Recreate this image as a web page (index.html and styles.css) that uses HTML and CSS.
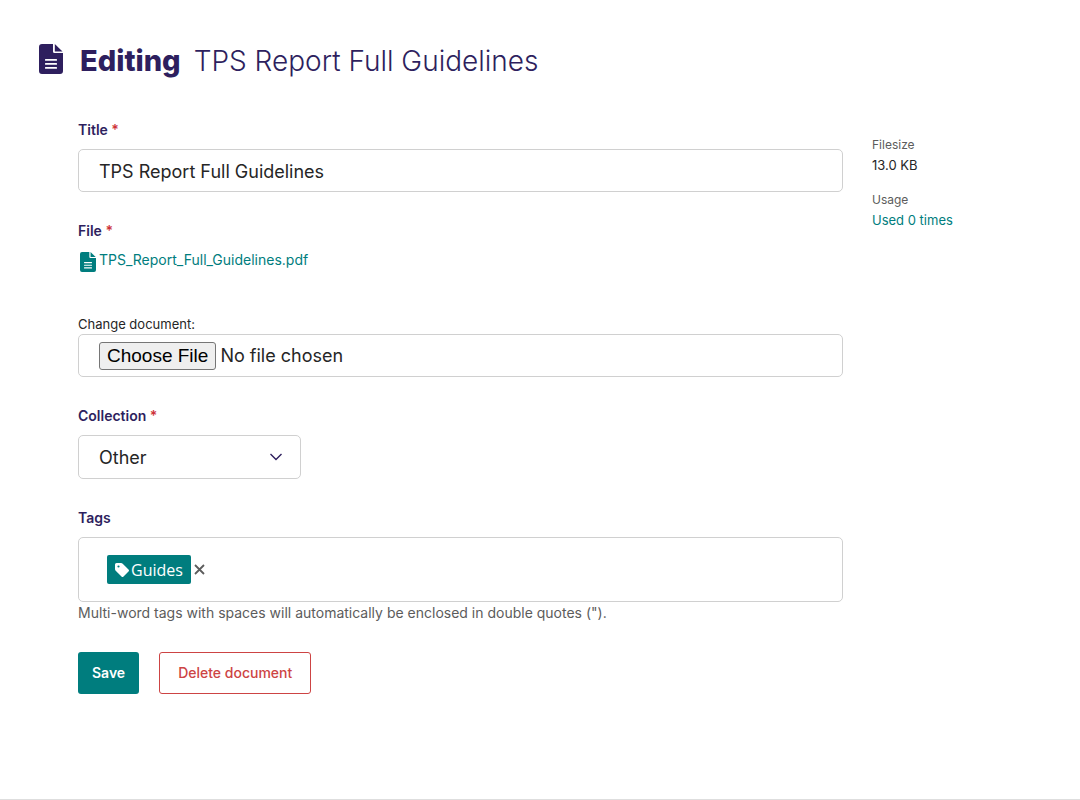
FILE: index.html
```html
<!DOCTYPE html>
<html lang="en">
<head>
<meta charset="utf-8">
<meta name="viewport" content="width=device-width, initial-scale=1">
<title>Editing TPS Report Full Guidelines</title>
<link rel="stylesheet" href="styles.css">
</head>
<body>
<svg class="sprite" aria-hidden="true">
  <symbol id="icon-doc" viewBox="0 0 24 30">
    <path fill="currentColor" fill-rule="evenodd" d="M3 0H14V7.500Q14 9 15.500 9H24V27Q24 30 21 30H3Q0 30 0 27V3Q0 0 3 0ZM6.500 15Q6 15 6 15.900T6.500 16.800H17.500Q18 16.800 18 15.900T17.500 15ZM6.500 19Q6 19 6 19.900T6.500 20.800H17.500Q18 20.800 18 19.900T17.500 19ZM6.500 23Q6 23 6 23.900T6.500 24.800H17.500Q18 24.800 18 23.900T17.500 23Z"/>
    <path fill="currentColor" d="M15.800 0L23.500 7.500H15.800Z"/>
  </symbol>
</svg>
<div class="page">
  <header class="header">
    <svg class="header-icon" aria-hidden="true"><use href="#icon-doc"/></svg>
    <h1 class="header-title"><strong>Editing</strong> <span>TPS Report Full Guidelines</span></h1>
  </header>
  <main class="layout">
    <form class="form">
      <div class="field">
        <label class="label" for="title">Title <span class="required">*</span></label>
        <input class="control" id="title" type="text" value="TPS Report Full Guidelines">
      </div>
      <div class="field file-field">
        <label class="label" for="file">File <span class="required">*</span></label>
        <a class="file-link" href="#"><svg class="file-icon" aria-hidden="true"><use href="#icon-doc"/></svg>TPS_Report_Full_Guidelines.pdf</a>
        <label class="change" for="file">Change document:</label>
        <input class="control file-control" id="file" type="file">
      </div>
      <div class="field">
        <label class="label" for="collection">Collection <span class="required">*</span></label>
        <div class="select-wrap">
          <select class="control select" id="collection"><option>Other</option></select>
          <svg class="chevron" viewBox="0 0 12 8" aria-hidden="true"><path d="M.5 1L6 6.500L11.500 1" fill="none" stroke="currentColor" stroke-width="1.400"/></svg>
        </div>
      </div>
      <div class="field">
        <label class="label" for="tags">Tags</label>
        <div class="tag-box">
          <span class="tag"><svg class="tag-icon" viewBox="0 0 14 14" aria-hidden="true"><path fill="currentColor" fill-rule="evenodd" d="M0 1.500Q0 0 1.500 0H6Q7 0 7.700.7L13.500 6.500Q14.500 7.500 13.500 8.500L8.500 13.500Q7.500 14.500 6.500 13.500L.7 7.700Q0 7 0 6ZM3.500 2.400A1.100 1.100 0 1 0 3.500 4.600A1.100 1.100 0 1 0 3.500 2.400Z"/></svg>Guides</span>
          <button class="tag-remove" type="button" aria-label="Remove Guides"><svg viewBox="0 0 11 11" aria-hidden="true"><path d="M1 1L10 10M10 1L1 10" stroke="currentColor" stroke-width="1.800"/></svg></button>
          <input class="tag-input" id="tags" type="text">
        </div>
        <p class="help">Multi-word tags with spaces will automatically be enclosed in double quotes (").</p>
      </div>
      <div class="actions">
        <button class="button save" type="submit">Save</button>
        <button class="button delete" type="button">Delete document</button>
      </div>
    </form>
    <aside>
      <dl class="meta">
        <dt>Filesize</dt>
        <dd>13.0 KB</dd>
        <dt>Usage</dt>
        <dd><a href="#">Used 0 times</a></dd>
      </dl>
    </aside>
  </main>
</div>
</body>
</html>
```
FILE: styles.css
```css
* {
  box-sizing: border-box;
}

body {
  margin: 0;
  background: #fff;
  color: #262626;
  font: 13px/20px Inter, "Liberation Sans", sans-serif;
}

a {
  color: #007d7e;
  text-decoration: none;
}

.sprite {
  position: absolute;
  width: 0;
  height: 0;
}

.page {
  min-height: 100vh;
  border-bottom: 1px solid #dedede;
}

.header {
  display: flex;
  align-items: center;
  gap: 17px;
  padding: 40px 39px 0;
  color: #2e1f5e;
}

.header-icon {
  width: 24px;
  height: 30px;
  flex: none;
  margin-bottom: 4px;
}

.header-title {
  display: flex;
  align-items: baseline;
  gap: 13px;
  margin: 0;
  font-size: 28px;
  line-height: 42px;
  font-weight: 300;
}

.header-title strong {
  font-size: 29px;
  font-weight: 800;
}

.layout {
  display: grid;
  grid-template-columns: minmax(0, 1fr) 188px;
  gap: 29px;
  padding: 38px 20px 40px 78px;
}

.field {
  display: flex;
  flex-direction: column;
  align-items: flex-start;
  margin-bottom: 29px;
}

.label {
  margin-bottom: 9px;
  color: #2e1f5e;
  font-size: 14px;
  font-weight: 600;
}

.required {
  color: #cd3238;
}

.control {
  width: 100%;
  height: 43px;
  margin: 0;
  padding: 1px 20px 0;
  border: 1px solid #d0d0d0;
  border-radius: 5px;
  background: #fff;
  color: #262626;
  font: 18px/24px Inter, "Liberation Sans", sans-serif;
}

.file-link {
  display: flex;
  margin: 0 0 42px 2px;
  font-size: 14px;
}

.file-icon {
  width: 16px;
  height: 20px;
  margin: 2px 3px 0 0;
}

.change {
  line-height: 20px;
}

.file-control {
  padding: 7px 20px;
}

.file-control::file-selector-button {
  height: 28px;
  margin: 0 4px 0 0;
  padding: 0 7px;
  border: 1px solid #767676;
  border-radius: 3px;
  background: #efefef;
  color: #000;
  font: 19px/24px "Liberation Sans", Arial, sans-serif;
}

.select-wrap {
  position: relative;
  width: 223px;
}

.select {
  display: block;
  height: 44px;
  appearance: none;
}

.chevron {
  position: absolute;
  top: 18px;
  right: 19px;
  width: 12px;
  height: 8px;
  color: #2e1f5e;
  pointer-events: none;
}

.tag-box {
  display: flex;
  align-items: center;
  width: 100%;
  height: 65px;
  padding: 0 28px;
  border: 1px solid #d0d0d0;
  border-radius: 5px;
}

.tag {
  display: flex;
  align-items: center;
  gap: 2px;
  height: 29px;
  padding: 0 8px;
  border-radius: 2px;
  background: #007d7e;
  color: #fff;
  font: 16px/24px "Open Sans", "Noto Sans", sans-serif;
}

.tag-icon {
  width: 14px;
  height: 14px;
}

.tag-remove {
  display: flex;
  padding: 3px;
  border: 0;
  background: none;
  color: #5c5c5c;
}

.tag-remove svg {
  width: 11px;
  height: 11px;
}

.tag-input {
  flex: 1;
  min-width: 0;
  border: 0;
  outline: 0;
  font: inherit;
}

.help {
  margin: 1px 0 0;
  color: #5c5c5c;
  font-size: 14px;
}

.actions {
  display: flex;
  gap: 20px;
}

.button {
  height: 42px;
  padding: 0 14px;
  border: 0;
  border-radius: 3px;
  font: 600 14px/20px Inter, "Liberation Sans", sans-serif;
}

.save {
  background: #007d7e;
  color: #fff;
}

.delete {
  padding: 0 18px;
  border: 1px solid #cd4444;
  background: #fff;
  color: #cd4444;
  font-weight: 500;
}

.meta {
  margin: 15px 0 0;
}

.meta dt {
  color: #5c5c5c;
  font-size: 12px;
}

.meta dd {
  margin: 0 0 15px;
}
```
